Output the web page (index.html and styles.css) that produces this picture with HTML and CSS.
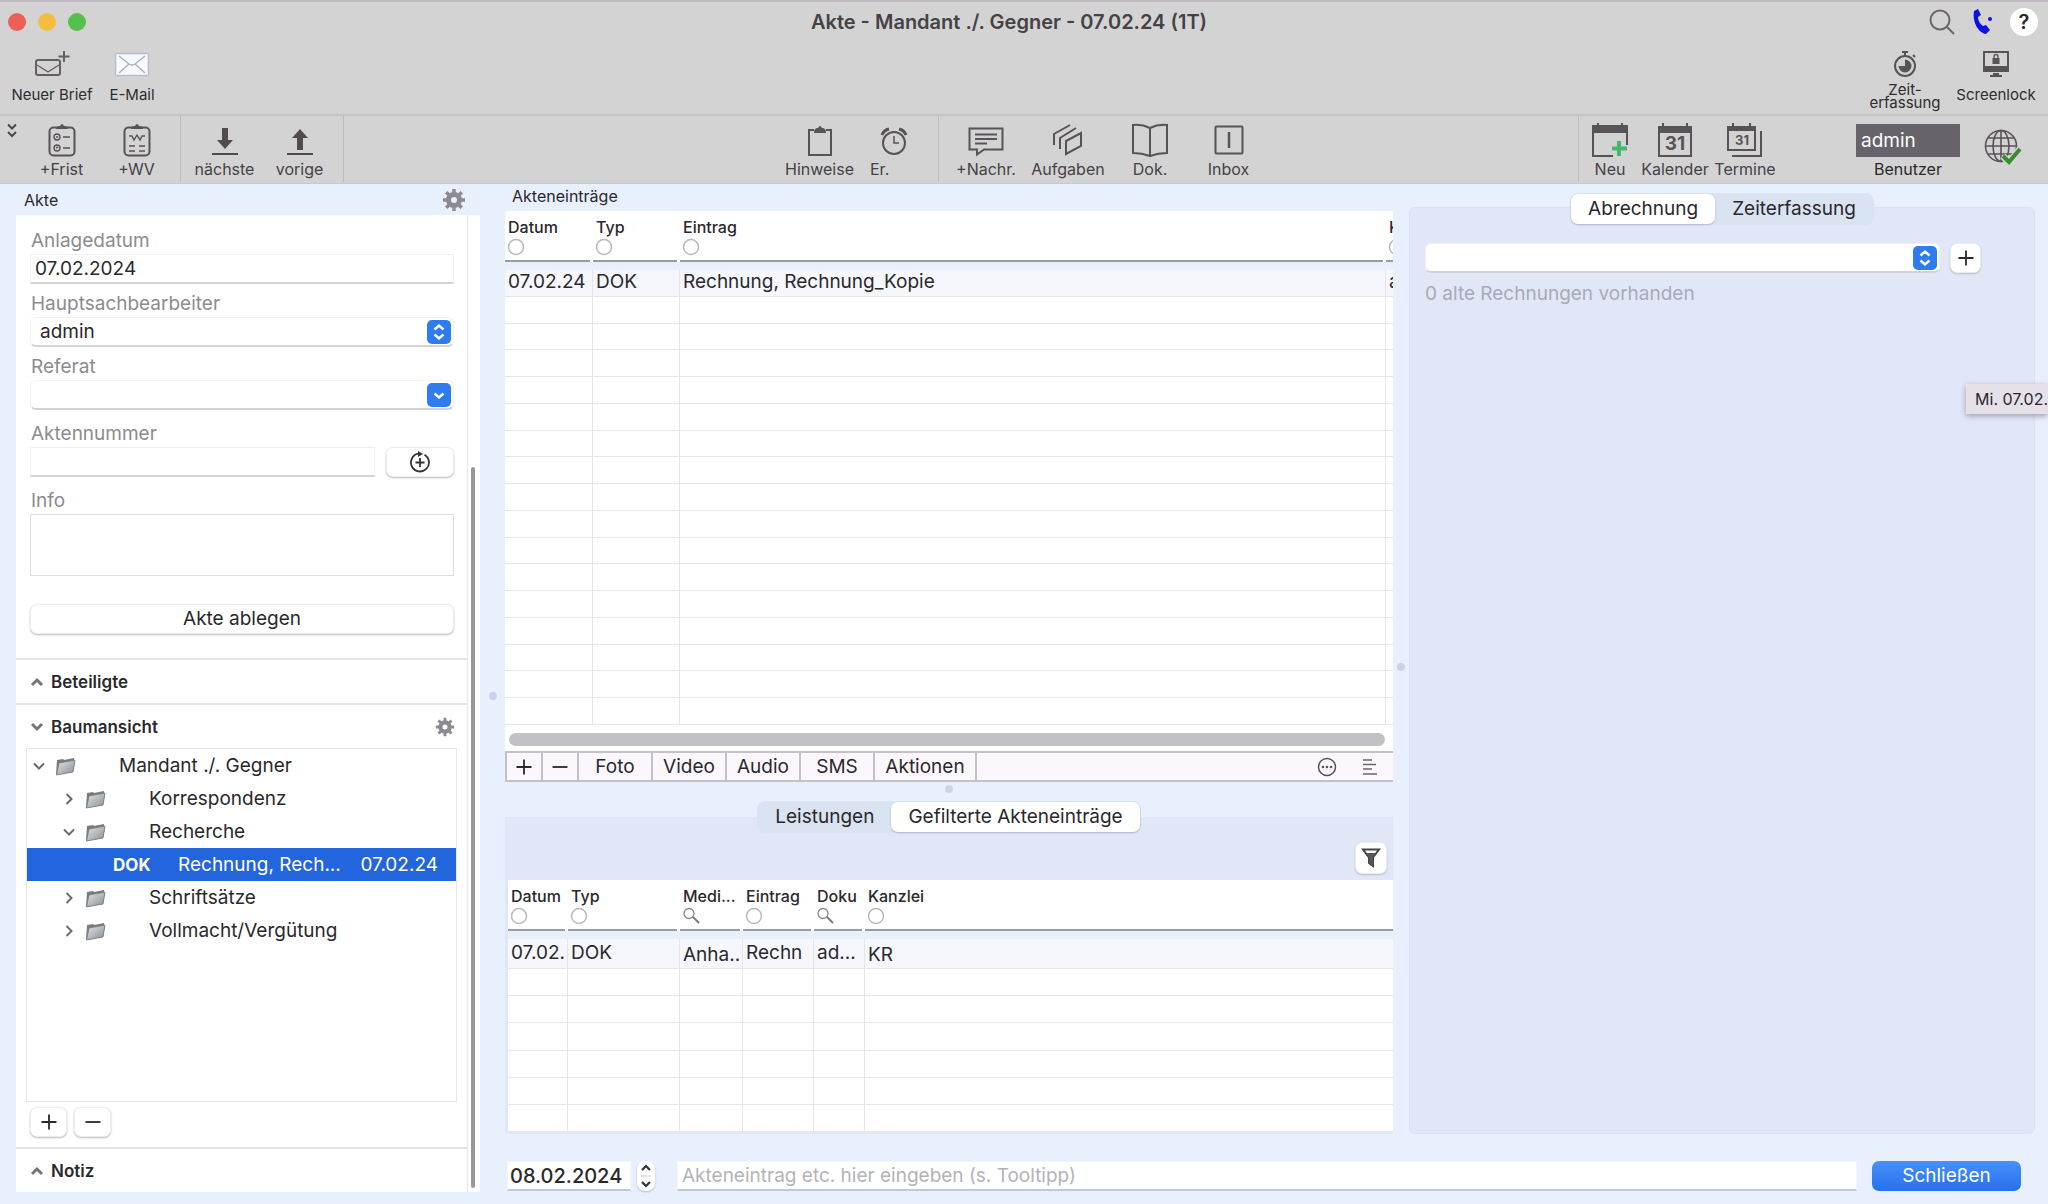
FILE: index.html
```html
<!DOCTYPE html>
<html lang="de">
<head>
<meta charset="utf-8">
<title>Akte - Mandant ./. Gegner - 07.02.24 (1T)</title>
<link rel="stylesheet" href="styles.css">
</head>
<body>
<svg class="sprite" aria-hidden="true">
  <symbol id="gear" viewBox="0 0 24 24"><g fill="none" stroke="currentColor"><circle cx="12" cy="12" r="5.500" stroke-width="5"/><g stroke-width="3.400"><path d="M12 1v4M12 19v4M1 12h4M19 12h4M4.200 4.200 7 7M17 17l2.800 2.800M4.200 19.800 7 17M17 7l2.800-2.800"/></g></g></symbol>
  <symbol id="up" viewBox="0 0 14 14"><path d="M2 10l5-5 5 5" fill="none" stroke="currentColor" stroke-width="3"/></symbol>
  <symbol id="down" viewBox="0 0 14 14"><path d="M2 4l5 5 5-5" fill="none" stroke="currentColor" stroke-width="3"/></symbol>
  <symbol id="open" viewBox="0 0 14 14"><path d="M2 4.500l5 5 5-5" fill="none" stroke="currentColor" stroke-width="2"/></symbol>
  <symbol id="closed" viewBox="0 0 14 14"><path d="M4.500 2l5 5-5 5" fill="none" stroke="currentColor" stroke-width="2"/></symbol>
  <symbol id="folder" viewBox="0 0 22 20"><path d="M2 4l6-1 1 1 10-2v3l1 .5L18 16 1 19z" fill="#777b80"/><path d="M4 7l16-3-2 12L1.500 19z" fill="url(#fg)" stroke="#74787d" stroke-width=".8"/></symbol>
  <linearGradient id="fg" x1="0" y1="0" x2="1" y2="1"><stop offset="0" stop-color="#e2e6ea"/><stop offset="1" stop-color="#888d93"/></linearGradient>
  <symbol id="plus" viewBox="0 0 16 16"><path d="M8 .5v15M.5 8h15" fill="none" stroke="currentColor" stroke-width="1.800"/></symbol>
  <symbol id="minus" viewBox="0 0 16 16"><path d="M.5 8h15" fill="none" stroke="currentColor" stroke-width="1.800"/></symbol>
  <symbol id="updown" viewBox="0 0 24 24"><rect width="24" height="24" rx="5" fill="#2f7bf2"/><path d="M7.500 9.500 12 5.500l4.500 4M7.500 14.500l4.500 4 4.500-4" fill="none" stroke="#fff" stroke-width="2.400"/></symbol>
  <symbol id="drop" viewBox="0 0 24 24"><rect width="24" height="24" rx="5" fill="#2f7bf2"/><path d="M7.500 10.500 12 14.500l4.500-4" fill="none" stroke="#fff" stroke-width="2.400"/></symbol>
  <symbol id="ring" viewBox="0 0 18 18"><circle cx="9" cy="9" r="7.500" fill="none" stroke="#b9b9bc" stroke-width="1.500"/></symbol>
  <symbol id="lens" viewBox="0 0 18 18"><circle cx="7" cy="6.500" r="5" fill="none" stroke="#8a8a8d" stroke-width="1.300"/><path d="M11 10l6 6" stroke="#77777a" stroke-width="1.800"/></symbol>
</svg>

<header class="header">
  <div class="titlebar">
    <div class="lights"><i class="light light--red"></i><i class="light light--yellow"></i><i class="light light--green"></i></div>
    <h1 class="title">Akte - Mandant ./. Gegner - 07.02.24 (1T)</h1>
    <div class="title-actions">
      <button class="plain" aria-label="Suchen"><svg width="28" height="28" viewBox="0 0 28 28" fill="none" stroke="#6a666a" stroke-width="2"><circle cx="12" cy="12" r="9.500"/><path d="M19 19l7 7"/></svg></button>
      <button class="plain" aria-label="Telefon"><svg width="22" height="28" viewBox="0 0 22 28" fill="#0a12e6"><path d="M2 3l4-2 3 6-3 2c0 4 2 7 5 9l3-1 4 5-4 4C7 25 0 15 2 3z"/><circle cx="18" cy="11" r="2"/></svg></button>
      <button class="help" aria-label="Hilfe">?</button>
    </div>
  </div>

  <div class="bar bar--top">
    <div class="bar-group">
      <button class="tool tool--sm"><svg width="36" height="28" viewBox="0 0 36 28" fill="none" stroke="#635f63" stroke-width="2"><rect x="2" y="10" width="24" height="15" rx="2"/><path d="M3 15l8 5 3 2 3-2 8-5" stroke-width="1.300"/><path d="M30 1v11M24.500 6.500h11"/></svg>Neuer Brief</button>
      <button class="tool tool--sm tool--mail"><svg width="36" height="28" viewBox="0 0 36 28"><rect x="1.500" y="3.500" width="33" height="22" fill="#f5f8fd" stroke="#b9bcc9" stroke-width="1.500"/><path d="M5 6l10 8q3 2 6 0l10-8M5 23l10-9M31 23l-10-9" fill="none" stroke="#a9adbb" stroke-width="1.300"/></svg>E-Mail</button>
    </div>
    <div class="bar-group">
      <button class="tool tool--sm tool--two"><svg width="26" height="28" viewBox="0 0 26 28" fill="none" stroke="#575357" stroke-width="2"><circle cx="13" cy="16" r="10"/><path d="M10 2h6M13 2v4M21 5l2 2"/><path d="M13 9.500V16H6.500A6.500 6.500 0 1 0 13 9.500z" fill="#575357" stroke="none"/></svg><span>Zeit-<br>erfassung</span></button>
      <button class="tool tool--sm"><svg width="28" height="28" viewBox="0 0 28 28" fill="#575357"><path d="M1 1h26v21H1zM3 3v13h22V3z" fill-rule="evenodd"/><path d="M11 23h6v2h3v2H8v-2h3z"/><rect x="10.500" y="8" width="7" height="6"/><path d="M12 8V6.500a2 2 0 0 1 4 0V8" fill="none" stroke="#575357" stroke-width="1.300"/></svg>Screenlock</button>
    </div>
  </div>

  <div class="bar bar--main">
    <div class="bar-group">
      <button class="plain more" aria-label="Mehr"><svg width="10" height="16" viewBox="0 0 10 16" fill="none" stroke="#4b484b" stroke-width="2"><path d="M1 1.500l4 4 4-4M1 9l4 4 4-4"/></svg></button>
      <button class="tool"><svg width="28" height="34" viewBox="0 0 28 34" fill="none" stroke="#575357" stroke-width="2"><rect x="1.500" y="4.500" width="25" height="28" rx="4"/><path d="M8 6q0-3 4-3 2-4 4 0 4 0 4 3z" fill="#575357" stroke="none"/><g stroke-width="1.400"><circle cx="9" cy="14" r="3"/><circle cx="9" cy="25" r="3"/><path d="M8 14h2M8 25l2-1M15 14h7M15 25h7"/></g></svg>+Frist</button>
      <button class="tool"><svg width="28" height="34" viewBox="0 0 28 34" fill="none" stroke="#575357" stroke-width="2"><rect x="1.500" y="4.500" width="25" height="28" rx="4"/><path d="M8 6q0-3 4-3 2-4 4 0 4 0 4 3z" fill="#575357" stroke="none"/><path d="M6 13h3l2 4 3-5 3 5 2-4h3M6 23h6M16 23h6M6 28h6M16 28h6" stroke-width="1.400"/></svg>+WV</button>
      <hr class="rule">
      <button class="tool"><svg width="28" height="34" viewBox="0 0 28 34" fill="#4f4b4f"><path d="M11 5h6v12h5l-8 9-8-9h5zM1 30h26v2H1z"/></svg>nächste</button>
      <button class="tool"><svg width="28" height="34" viewBox="0 0 28 34" fill="#4f4b4f"><path d="M11 27h6V15h5l-8-9-8 9h5zM1 30h26v2H1z"/></svg>vorige</button>
      <hr class="rule">
    </div>
    <div class="bar-group">
      <button class="tool"><svg width="28" height="34" viewBox="0 0 28 34" fill="none" stroke="#575357" stroke-width="2"><path d="M8 7H3v25h22V7h-5"/><path d="M8 10q0-5 4-5 2-4 4 0 4 0 4 5z" fill="#575357" stroke="none"/></svg>Hinweise</button>
      <button class="tool tool--er"><svg width="28" height="34" viewBox="0 0 28 34" fill="none" stroke="#575357" stroke-width="2"><circle cx="14" cy="20" r="11"/><path d="M14 13v7h5" stroke-width="1.500"/><path d="M2 12q2-5 7-6M26 12q-2-5-7-6" stroke-width="3"/></svg>Er.</button>
      <hr class="rule">
      <button class="tool tool--wide"><svg width="36" height="34" viewBox="0 0 36 34" fill="none" stroke="#575357" stroke-width="2"><path d="M1.500 5.500h33v21H16l-7 5v-5H1.500z"/><path d="M7 11.500h22M7 16h22M7 20.500h12"/></svg>+Nachr.</button>
      <button class="tool tool--wide"><svg width="32" height="34" viewBox="0 0 32 34" fill="none" stroke="#575357" stroke-width="2"><path d="M2 22V11L18 2M8 26V15L24 5"/><path d="M14 18l15-8v13l-15 8z"/></svg>Aufgaben</button>
      <button class="tool tool--wide"><svg width="36" height="34" viewBox="0 0 36 34" fill="none" stroke="#575357" stroke-width="2"><path d="M18 5q-8-4-17-3v28q9 0 17 3 8-3 17-3V2q-9-1-17 3zM18 5v28"/></svg>Dok.</button>
      <button class="tool"><svg width="30" height="34" viewBox="0 0 30 34" fill="none" stroke="#575357" stroke-width="2"><rect x="1.500" y="3.500" width="27" height="27" rx="1"/><path d="M15 9v16" stroke-width="2.500"/></svg>Inbox</button>
    </div>
    <div class="bar-group bar-group--end">
      <hr class="rule rule--tight">
      <button class="tool tool--new"><svg width="36" height="34" viewBox="0 0 36 34" fill="none" stroke="#575357" stroke-width="2"><path d="M35 22V3H1v30h20"/><path d="M1 3h34v6H1z" fill="#575357"/><path d="M6 0v4M30 0v4"/><path d="M27 18v15M20 25.500h15" stroke="#45b96b" stroke-width="4"/></svg>Neu</button>
      <button class="tool tool--cal"><svg width="36" height="34" viewBox="0 0 36 34" fill="none" stroke="#575357" stroke-width="2"><path d="M2 4h32v29H2z"/><path d="M2 4h32v5H2z" fill="#575357"/><path d="M6 0v4M30 0v4"/><text x="18" y="27" class="cal-day">31</text></svg>Kalender</button>
      <button class="tool tool--cal"><svg width="36" height="34" viewBox="0 0 36 34" fill="none" stroke="#575357" stroke-width="2"><path d="M1 4h27v23H1z"/><path d="M1 4h27v3H1z" fill="#575357"/><path d="M6 0v4M23 0v4M34 8v25H5"/><text x="15" y="22" class="cal-day cal-day--sm">31</text></svg>Termine</button>
      <div class="user"><label for="user">Benutzer</label><input id="user" value="admin"></div>
      <button class="plain globe" aria-label="Online"><svg width="38" height="38" viewBox="0 0 38 38" fill="none" stroke="#575357" stroke-width="1.600"><circle cx="17" cy="17" r="15.500"/><ellipse cx="17" cy="17" rx="8" ry="15.500"/><path d="M17 1.500v31M1.500 17h31M4 9h26M4 25h26"/><path d="M19 27l6 7L36 20" stroke="#d4d3d4" stroke-width="7"/><path d="M19 27l6 6 11-13" stroke="#3a8a2e" stroke-width="4"/></svg></button>
    </div>
  </div>
</header>

<main class="main">
  <aside class="side">
    <div class="side-head"><h2 class="caption">Akte</h2><button class="plain" aria-label="Einstellungen"><svg class="gear"><use href="#gear"/></svg></button></div>
    <div class="side-panel">
      <div class="side-content">
        <form class="form">
          <div class="field field--close"><label for="anlage">Anlagedatum</label><input class="input" id="anlage" value="07.02.2024"></div>
          <div class="field field--close"><label for="haupt">Hauptsachbearbeiter</label>
            <div class="select"><select id="haupt"><option>admin</option></select><svg class="select-icon"><use href="#updown"/></svg></div></div>
          <div class="field"><label for="referat">Referat</label>
            <div class="select"><select id="referat"><option></option></select><svg class="select-icon"><use href="#drop"/></svg></div></div>
          <div class="field"><label for="nummer">Aktennummer</label>
            <div class="number-row"><input class="input" id="nummer"><button class="button" type="button" aria-label="Nummer vergeben"><svg width="22" height="22" viewBox="0 0 22 22" fill="none" stroke="#333" stroke-width="1.800"><path d="M15.500 3.700A9 9 0 1 1 9 2.700M11 7v9M6.500 11.500h9"/><path d="M9 0l5 3-5 3z" fill="#333" stroke="none"/></svg></button></div></div>
          <div class="field"><label for="info">Info</label><textarea class="info" id="info"></textarea></div>
          <button class="button button--block" type="button">Akte ablegen</button>
        </form>
        <button class="section"><svg class="chevron"><use href="#up"/></svg>Beteiligte</button>
        <div class="tree-section">
          <div class="tree-head"><button class="section section--bare"><svg class="chevron"><use href="#down"/></svg>Baumansicht</button><button class="plain" aria-label="Baum einstellen"><svg class="gear gear--sm"><use href="#gear"/></svg></button></div>
          <ul class="tree">
            <li class="node"><svg class="twist"><use href="#open"/></svg><svg class="folder"><use href="#folder"/></svg><span class="node-name">Mandant ./. Gegner</span></li>
            <li class="node node--child"><svg class="twist"><use href="#closed"/></svg><svg class="folder"><use href="#folder"/></svg><span class="node-name">Korrespondenz</span></li>
            <li class="node node--child"><svg class="twist"><use href="#open"/></svg><svg class="folder"><use href="#folder"/></svg><span class="node-name">Recherche</span></li>
            <li class="node node--selected"><b>DOK</b><span class="doc-name">Rechnung, Rech...</span><span>07.02.24</span></li>
            <li class="node node--child"><svg class="twist"><use href="#closed"/></svg><svg class="folder"><use href="#folder"/></svg><span class="node-name">Schriftsätze</span></li>
            <li class="node node--child"><svg class="twist"><use href="#closed"/></svg><svg class="folder"><use href="#folder"/></svg><span class="node-name">Vollmacht/Vergütung</span></li>
          </ul>
          <div class="tree-actions"><button class="button button--sq" aria-label="Hinzufügen"><svg class="sign"><use href="#plus"/></svg></button><button class="button button--sq" aria-label="Entfernen"><svg class="sign"><use href="#minus"/></svg></button></div>
        </div>
        <button class="section">
          <svg class="chevron"><use href="#up"/></svg>Notiz</button>
      </div>
      <div class="scroll"><div class="scroll-thumb"></div></div>
    </div>
  </aside>
  <div class="split split--v"><i class="dot"></i></div>

  <div class="work">
    <div class="columns">
      <section class="entries">
        <h2 class="caption caption--entries">Akteneinträge</h2>
        <div class="grid-box">
          <table class="grid grid--main">
            <colgroup><col class="c-date"><col class="c-type"><col><col class="c-rest"></colgroup>
            <thead><tr>
              <th><div>Datum<svg><use href="#ring"/></svg></div></th><th><div>Typ<svg><use href="#ring"/></svg></div></th><th><div>Eintrag<svg><use href="#ring"/></svg></div></th><th><div>K<svg><use href="#ring"/></svg></div></th>
            </tr></thead>
            <tbody>
              <tr class="filled"><td>07.02.24</td><td>DOK</td><td>Rechnung, Rechnung_Kopie</td><td>a</td></tr>
              <tr><td></td><td></td><td></td><td></td></tr><tr><td></td><td></td><td></td><td></td></tr><tr><td></td><td></td><td></td><td></td></tr><tr><td></td><td></td><td></td><td></td></tr>
              <tr><td></td><td></td><td></td><td></td></tr><tr><td></td><td></td><td></td><td></td></tr><tr><td></td><td></td><td></td><td></td></tr><tr><td></td><td></td><td></td><td></td></tr>
              <tr><td></td><td></td><td></td><td></td></tr><tr><td></td><td></td><td></td><td></td></tr><tr><td></td><td></td><td></td><td></td></tr><tr><td></td><td></td><td></td><td></td></tr>
              <tr><td></td><td></td><td></td><td></td></tr><tr><td></td><td></td><td></td><td></td></tr><tr><td></td><td></td><td></td><td></td></tr><tr><td></td><td></td><td></td><td></td></tr>
            </tbody>
          </table>
        </div>
        <div class="hscroll"><div class="hscroll-thumb"></div></div>
        <div class="entry-bar">
          <button class="cell cell--sign" aria-label="Neu"><svg class="sign"><use href="#plus"/></svg></button><button class="cell cell--sign" aria-label="Löschen"><svg class="sign"><use href="#minus"/></svg></button><button class="cell">Foto</button><button class="cell">Video</button><button class="cell">Audio</button><button class="cell">SMS</button><button class="cell cell--wide">Aktionen</button>
          <div class="entry-icons">
            <button class="plain" aria-label="Optionen"><svg width="20" height="20" viewBox="0 0 20 20"><circle cx="10" cy="10" r="8.500" fill="none" stroke="#555" stroke-width="1.500"/><g fill="#555"><circle cx="6" cy="10" r="1.300"/><circle cx="10" cy="10" r="1.300"/><circle cx="14" cy="10" r="1.300"/></g></svg></button>
            <button class="plain" aria-label="Liste"><svg width="18" height="18" viewBox="0 0 18 18" stroke="#666" stroke-width="1.500"><path d="M2 2h9M2 6.500h13M2 11h9M2 16h14"/></svg></button>
          </div>
        </div>
        <div class="split split--h"><i class="dot"></i></div>
        <div class="tabs"><button class="tab">Leistungen</button><button class="tab tab--on">Gefilterte Akteneinträge</button></div>
        <div class="filtered">
          <div class="filter-row"><button class="button button--filter" aria-label="Filter"><svg width="20" height="22" viewBox="0 0 20 22" fill="none" stroke="#444" stroke-width="2"><path d="M2 2.500h16l-6 8V19l-4-3v-5.500z"/><path d="M5 6h10l-3 4.500V19l-4-3v-5.500z" fill="#555" stroke="none"/></svg></button></div>
          <table class="grid grid--filtered">
            <colgroup><col class="f-date"><col class="f-type"><col class="f-media"><col class="f-entry"><col class="f-doc"><col></colgroup>
            <thead><tr>
              <th><div>Datum<svg><use href="#ring"/></svg></div></th><th><div>Typ<svg><use href="#ring"/></svg></div></th><th><div>Medi...<svg><use href="#lens"/></svg></div></th><th><div>Eintrag<svg><use href="#ring"/></svg></div></th><th><div>Doku<svg><use href="#lens"/></svg></div></th><th><div>Kanzlei<svg><use href="#ring"/></svg></div></th>
            </tr></thead>
            <tbody>
              <tr class="filled"><td>07.02.</td><td>DOK</td><td class="low">Anha..</td><td>Rechn</td><td>ad...</td><td class="low">KR</td></tr>
              <tr><td></td><td></td><td></td><td></td><td></td><td></td></tr><tr><td></td><td></td><td></td><td></td><td></td><td></td></tr><tr><td></td><td></td><td></td><td></td><td></td><td></td></tr>
              <tr><td></td><td></td><td></td><td></td><td></td><td></td></tr><tr><td></td><td></td><td></td><td></td><td></td><td></td></tr><tr><td></td><td></td><td></td><td></td><td></td><td></td></tr>
            </tbody>
          </table>
        </div>
      </section>
      <div class="split split--v split--narrow"><i class="dot"></i></div>
      <section class="billing">
        <div class="tabs tabs--right"><button class="tab tab--on">Abrechnung</button><button class="tab">Zeiterfassung</button></div>
        <div class="billing-panel">
          <div class="invoice-row"><div class="select select--boxed"><select aria-label="Rechnung"><option></option></select><svg class="select-icon"><use href="#updown"/></svg></div><button class="button button--add" aria-label="Neue Rechnung"><svg class="sign"><use href="#plus"/></svg></button></div>
          <p class="hint">0 alte Rechnungen vorhanden</p>
        </div>
      </section>
    </div>
    <footer class="footer">
      <input class="input input--date" value="08.02.2024" aria-label="Datum">
      <button class="stepper" aria-label="Datum ändern"><svg width="10" height="26" viewBox="0 0 10 26" fill="none" stroke="#333" stroke-width="2.200"><path d="M1 7l4-4 4 4M1 19l4 4 4-4"/><path d="M0 13h10" stroke="#ccc" stroke-width="1"/></svg></button>
      <input class="input input--entry" placeholder="Akteneintrag etc. hier eingeben (s. Tooltipp)" aria-label="Akteneintrag">
      <button class="close">Schließen</button>
    </footer>
  </div>
</main>
<div class="tooltip" role="tooltip">Mi. 07.02.</div>
</body>
</html>
```
FILE: styles.css
```css
* { box-sizing: border-box; }

body {
  margin: 0;
  min-height: 100vh;
  display: flex;
  flex-direction: column;
  overflow-x: hidden;
  font: 19px/22px Inter, "Liberation Sans", sans-serif;
  color: #2b282c;
  background: #e8f0fe;
}

button, input, select, textarea { font: inherit; color: inherit; margin: 0; padding: 0; border: 0; background: none; }
h1, h2, p, ul { margin: 0; padding: 0; }
svg { display: block; flex: none; }
.sprite { position: absolute; width: 0; height: 0; }
.plain { display: grid; place-items: center; }

/* Window header */
.header { background: #d4d3d4; border-top: 2px solid #bfbabf; border-bottom: 1px solid #c9c8cd; }
.titlebar { display: grid; grid-template-columns: 1fr auto 1fr; align-items: center; height: 40px; padding: 0 10px 0 8px; }
.lights { display: flex; gap: 12px; }
.light { width: 18px; height: 18px; border-radius: 50%; }
.light--red { background: #ee5f58; }
.light--yellow { background: #f5bd40; }
.light--green { background: #57c04d; }
.title { font-size: 20px; font-weight: 600; color: #454246; margin-right: 28px; }
.title-actions { display: flex; justify-content: flex-end; align-items: center; gap: 16px; }
.help { width: 28px; height: 28px; border-radius: 50%; background: #fff; font-size: 20px; font-weight: 600; }

.bar { display: flex; justify-content: space-between; }
.bar--top { height: 72px; padding: 8px 10px 0; }
.bar--main { display: grid; grid-template-columns: 1fr auto 1fr; height: 69px; border-top: 2px solid #c6c5c7; }
.bar-group { display: flex; align-items: flex-start; }
.bar-group--end { justify-content: flex-end; }
.tool { display: flex; flex-direction: column; align-items: center; gap: 2px; width: 75px; padding-top: 7px; font-size: 16px; line-height: 20px; color: #454146; white-space: nowrap; }
.tool--wide { width: 82px; }
.tool--cal { width: 70px; }
.tool--new { width: 60px; }
.tool--er { align-items: flex-start; padding-left: 13px; }
.tool--er svg { margin-left: 10px; }
.tool--sm { width: 84px; padding-top: 0; gap: 7px; font-size: 15px; color: #2f2c30; }
.tool--mail { width: 76px; }
.tool--two { width: 98px; gap: 5px; line-height: 13px; }
.rule { width: 1px; height: 66px; margin: 0 6px; border: 0; background: #bdbbbe; }
.rule--tight { margin: 0 1px; }
.more { width: 24px; padding: 7px 0 0; }
.cal-day { font: 700 19px Inter, sans-serif; fill: #575357; stroke: none; text-anchor: middle; }
.cal-day--sm { font-size: 13px; }
.user { display: flex; flex-direction: column-reverse; gap: 2px; width: 104px; margin: 8px 0 0 76px; font-size: 16px; line-height: 20px; text-align: center; }
.user input { width: 100%; height: 33px; padding: 0 5px; background: #68636a; color: #fff; font-size: 19px; }
.globe { margin: 13px 26px 0 24px; }

/* Main area */
.main { flex: 1; display: flex; padding: 0 13px 12px 16px; }
.side { display: flex; flex-direction: column; width: 464px; }
.side-head { display: flex; justify-content: space-between; align-items: center; height: 31px; padding: 0 14px 0 8px; }
.caption { font-size: 16px; font-weight: 400; }
.gear { width: 24px; height: 24px; color: #8b8a8e; }
.gear--sm { width: 20px; height: 20px; }
.side-panel { flex: 1; display: flex; background: #fff; }
.side-content { flex: 1; min-width: 0; display: flex; flex-direction: column; border-right: 1px solid #e6e6e8; }
.scroll { width: 12px; padding: 252px 5px 4px 3px; display: flex; }
.scroll-thumb { flex: 1; border-radius: 2px; background: #98989a; }

.form { padding: 15px 13px 24px 14px; }
.field { display: flex; flex-direction: column; gap: 2px; margin-bottom: 13px; }
.field--close { margin-bottom: 9px; }
.field label { color: #8d8b8f; padding-left: 1px; }
.input { width: 100%; min-width: 0; height: 30px; padding: 0 4px; border: 1px solid #efeff1; border-bottom: 2px solid #d3d3d6; background: #fff; }
.select { display: grid; align-items: center; }
.select select, .select-icon { grid-area: 1 / 1; }
.select select { appearance: none; width: 100%; height: 30px; padding: 0 30px 0 9px; border: 1px solid #f1f1f3; border-bottom: 2px solid #d3d3d6; border-radius: 6px; background: #fff; }
.select-icon { width: 24px; height: 24px; justify-self: end; margin-right: 3px; pointer-events: none; }
.number-row { display: grid; grid-template-columns: 1fr 68px; gap: 11px; }
.button { display: grid; place-items: center; height: 30px; border-radius: 7px; border: 1px solid #ececef; background: #fff; box-shadow: 0 1px 2px #bbbbc2; }
.button--block { width: 100%; margin-top: 28px; }
.button--sq { width: 37px; }
.button--add { width: 31px; }
.button--filter { width: 32px; height: 32px; }
.sign { width: 16px; height: 16px; }
.info { height: 62px; resize: none; border: 1px solid #dedee0; }

.section { display: flex; align-items: center; gap: 7px; height: 45px; padding-left: 14px; border-top: 2px solid #e4e4e6; font-weight: 600; font-size: 17px; }
.section--bare { border: 0; height: 43px; padding-left: 4px; }
.chevron { width: 14px; height: 14px; color: #77757a; }
.tree-section { flex: 1; display: flex; flex-direction: column; padding: 0 10px 10px; border-top: 2px solid #e4e4e6; }
.tree-head { display: flex; justify-content: space-between; align-items: center; height: 43px; padding-right: 2px; }
.tree { flex: 1; border: 1px solid #e7e7e9; list-style: none; }
.node { display: flex; align-items: center; height: 33px; padding-left: 5px; }
.node--child { padding-left: 35px; }
.twist { width: 14px; height: 14px; color: #6d6b70; }
.folder { width: 22px; height: 20px; margin: 0 42px 0 9px; }
.node--selected { background: #2365dc; color: #fff; padding: 0 18px 0 86px; }
.node--selected b { font-size: 17px; font-weight: 700; width: 65px; }
.doc-name { flex: 1; white-space: nowrap; }
.tree-actions { display: flex; gap: 7px; padding: 5px 4px 0; }

.split { display: flex; align-items: center; justify-content: center; }
.split--v { width: 25px; padding-top: 16px; }
.split--narrow { width: 16px; }
.split--h { height: 14px; }
.dot { width: 8px; height: 8px; border-radius: 50%; background: #cdd3e6; }

.work { flex: 1; min-width: 0; display: flex; flex-direction: column; }
.columns { flex: 1; display: flex; }
.entries { flex: 888 1 0; min-width: 0; display: flex; flex-direction: column; }
.billing { flex: 626 1 0; min-width: 0; display: flex; flex-direction: column; padding-top: 9px; }
.caption--entries { height: 27px; padding: 1px 0 0 7px; }

/* Data grids */
.grid-box { height: 516px; background: #fff; }
.grid { width: 100%; table-layout: fixed; border-collapse: separate; border-spacing: 0; background: #fff; }
.grid--main { height: 514px; }
.grid th { height: 59px; padding: 0; overflow: hidden; vertical-align: top; text-align: left; font-size: 16px; font-weight: 500; line-height: 21px; border-bottom: 8px solid #e9effb; }
.grid th div { height: 51px; margin-right: 3px; padding: 6px 0 0 3px; border-bottom: 2px solid #9b9ca2; white-space: nowrap; }
.grid th:last-child div { margin-right: 0; }
.grid th svg { width: 18px; height: 18px; margin-left: -1px; }
.grid td { height: 26px; padding: 0 0 2px 3px; line-height: 22px; overflow: hidden; white-space: nowrap; border-right: 1px solid #e6e4e8; border-bottom: 1px solid #e9e7eb; }
.grid td:last-child { border-right: 0; }
.grid .filled td { background: #f6f7fd; }
.c-date { width: 88px; }
.c-type { width: 87px; }
.c-rest { width: 7px; }
.grid--filtered { height: 252px; }
.f-date { width: 60px; }
.f-type { width: 112px; }
.f-media { width: 63px; }
.f-entry { width: 71px; }
.f-doc { width: 51px; }
.grid .low { padding-top: 4px; }

.hscroll { height: 24px; padding: 6px 8px 5px 4px; background: #fff; }
.hscroll-thumb { height: 13px; border-radius: 7px; background: #c3c1c6; }
.entry-bar { display: flex; height: 31px; border: 2px solid #c4c0c8; border-right: 0; background: #fcf7fc; }
.cell { width: 74px; border-right: 2px solid #c4c0c8; }
.cell--sign { display: grid; place-items: center; width: 36px; }
.cell--wide { width: 102px; }
.entry-icons { display: flex; align-items: center; gap: 24px; margin-left: auto; padding-right: 14px; }

.tabs { align-self: center; z-index: 1; display: flex; margin: 5px 0 -16px; padding: 1px; border-radius: 8px; background: #dae3f2; }
.tabs--right { margin: 0 0 -18px; }
.tab { height: 30px; padding: 0 17px; border-radius: 7px; white-space: nowrap; }
.tab--on { background: #fff; box-shadow: 0 1px 2px #aeb3c4; }
.filtered { display: flex; flex-direction: column; padding: 0 0 2px 3px; background: #e2e7f8; }
.filter-row { display: flex; justify-content: flex-end; height: 63px; padding: 25px 6px 0; }
.billing-panel { flex: 1; padding: 35px 15px; border: 1px solid #dce2f2; border-radius: 6px; background: #e2e7f8; }
.invoice-row { display: flex; gap: 10px; padding-right: 38px; }
.select--boxed { flex: 1; }
.hint { margin-top: 10px; color: #a7aab8; }

.footer { display: flex; align-items: flex-start; height: 58px; padding: 27px 14px 0 2px; }
.footer .input { border-color: #f4f6fa #f4f6fa #c3c8d2; }
.footer .input--date { width: 124px; padding: 0 2px; font-size: 20px; font-weight: 500; }
.stepper { display: grid; place-items: center; width: 18px; height: 30px; margin: 0 22px 0 6px; border-radius: 8px; background: #fff; box-shadow: 0 1px 2px #b4b8c4; }
.footer .input--entry { flex: 1; width: auto; margin-right: 15px; }
.input--entry::placeholder { color: #b4b3b8; opacity: 1; }
.close { width: 149px; height: 30px; border-radius: 7px; background: linear-gradient(#4a90f8, #2570f0); color: #fff; }

.tooltip { position: absolute; top: 384px; right: 0; z-index: 2; height: 30px; padding: 4px 0 0 9px; font-size: 16px; background: #e6e1e9; box-shadow: 0 2px 6px #9a9db0; white-space: nowrap; }
```
